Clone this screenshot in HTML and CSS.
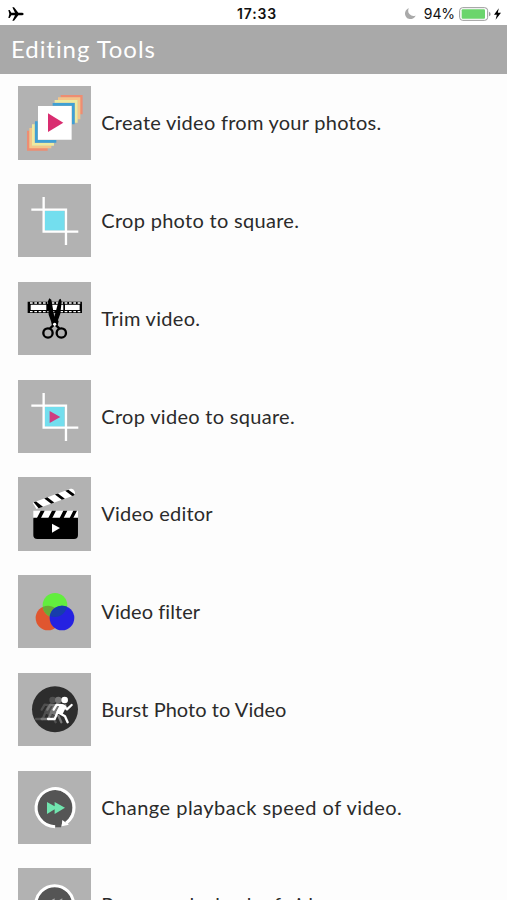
FILE: index.html
```html
<!DOCTYPE html>
<html lang="en">
<head>
<meta charset="utf-8">
<meta name="viewport" content="width=device-width">
<title>Editing Tools</title>
<link rel="stylesheet" href="styles.css">
</head>
<body>
<div class="status">
  <svg class="plane" viewBox="0 0 48 42"><path d="M1 9h4l5 8h11L13 1h5l13 16h12q4 1 4 4t-4 4H31L18 41h-5l8-16H10l-5 8H1l3-12z"/></svg>
  <span class="time">17:33</span>
  <div class="power">
    <svg class="moon" viewBox="0 0 34 34"><path d="M12 1A17 17 0 1 0 33 23A16 16 0 0 1 12 1z"/></svg>
    <span class="percent">94%</span>
    <svg class="battery" viewBox="0 0 96 42"><rect x="2" y="2" width="84" height="38" rx="9" fill="#fff" stroke="#999" stroke-width="3"/><rect x="8" y="7" width="70" height="28" rx="3" fill="#6bd56c"/><path d="M90 14q5 2 5 7t-5 7z" fill="#999"/></svg>
    <svg class="bolt" viewBox="0 0 22 36"><path d="M15 0L0 20h9L5 36L22 14h-10z"/></svg>
  </div>
</div>
<header class="bar"><h1>Editing Tools</h1></header>
<main class="list">
  <div class="row">
    <svg class="tile" viewBox="0 0 220 220">
      <g fill="none" stroke-width="8">
        <path stroke="#ee8d72" d="M128 31h62v54M31 134v56h58"/>
        <path stroke="#f4c58a" d="M120 38h63v62M38 126v57h62"/>
        <path stroke="#eeeaa0" d="M110 46h65v64M46 115v60h62"/>
        <path stroke="#3fa0d4" d="M104 55h62v60M55 106v60h60"/>
      </g>
      <path fill="#fff" d="M60 60h101v101H60z"/><path fill="#d92d70" d="M90 82v56l46-28z"/>
    </svg>
    <span class="label l1">Create video from your photos.</span>
  </div>
  <div class="row">
    <svg class="tile" viewBox="0 0 220 220"><path fill="#73deee" d="M80 80h60v60H80z"/><path class="crop" d="M77 39v104h104M40 77h104v106"/></svg>
    <span class="label l2">Crop photo to square.</span>
  </div>
  <div class="row">
    <svg class="tile" viewBox="0 0 220 220">
      <path d="M29 59h163v34H29z"/><path fill="#fff" d="M38 68h47v16H38zM101 68h35v16h-35zM141 68h44v16h-44z"/>
      <path stroke="#fff" stroke-width="4" stroke-dasharray="8 5" d="M36 63h152M36 89h152"/>
      <path d="M90 58l4-9 6 4 9 51 14-51 5-3 3 9-4 36-12 33h-12l-11-30zM99 117l8-8h6l9 8-3 14h-17z"/>
      <circle cx="110" cy="127" r="5" fill="#fff"/>
      <g fill="none" stroke="#000" stroke-width="7"><circle cx="90" cy="153" r="14"/><circle cx="130" cy="153" r="14"/><path d="M96 139l10-9M124 139l-10-9"/></g>
    </svg>
    <span class="label l3">Trim video.</span>
  </div>
  <div class="row">
    <svg class="tile" viewBox="0 0 220 220"><path fill="#73deee" d="M80 80h60v60H80z"/><path class="crop" d="M77 39v104h104M40 77h104v106"/><path fill="#cf3c80" d="M95 93v36l32-18z"/></svg>
    <span class="label l4">Crop video to square.</span>
  </div>
  <div class="row">
    <svg class="tile" viewBox="0 0 220 220">
      <g transform="translate(44 77) rotate(-20)"><path fill="#fff" d="M0 0h121q9 0 9 11t-9 11H4z"/><path d="M3 0h8l14 22H11zM37 0h10l14 22H51zM71 0h10l14 22H85zM104 0h10l13 19-3 3h-6z"/></g>
      <path fill="#fff" d="M46 101h134v24H46z"/><path d="M68 101h12l-11 22H57zM102 101h12l-11 22H91zM136 101h12l-11 22h-12zM166 101h11l-11 22h-11z"/>
      <path d="M46 122h134v52q0 12-12 12H58q-12 0-12-12z"/><path fill="#fff" d="M102 140v27l24-14z"/>
    </svg>
    <span class="label l5">Video editor</span>
  </div>
  <div class="row">
    <svg class="tile" viewBox="0 0 220 220"><circle cx="90" cy="129" r="37" fill="#e0562f"/><circle cx="111" cy="91" r="37" fill="#62ee3e"/><path fill="#68ab37" d="M74 96a37 37 0 0 1 53 28a37 37 0 0 1-53-28z"/><circle cx="132" cy="129" r="37" fill="#2521e1"/><path fill="#173dac" d="M96 123a37 37 0 0 1 51-28a37 37 0 0 1-51 28z"/></svg>
    <span class="label l6">Video filter</span>
  </div>
  <div class="row">
    <svg class="tile" viewBox="0 0 220 220">
      <defs><g id="runner"><circle cx="140" cy="81" r="10"/><path fill="none" stroke="currentColor" stroke-width="7" stroke-linecap="round" stroke-linejoin="round" d="M107 110l9-15 19 2 12 12 14-13M131 98l-12 19 22 13 8 18M118 119l-8 19H90"/><path d="M127 92l19 7-12 24-19-6z"/></g></defs>
      <circle cx="111" cy="109" r="69" fill="#2d2d2d"/>
      <use href="#runner" x="-36" fill="#505050" color="#505050"/><use href="#runner" x="-19" fill="#777" color="#777"/><use href="#runner" fill="#fff" color="#fff"/>
    </svg>
    <span class="label l7">Burst Photo to Video</span>
  </div>
  <div class="row">
    <svg class="tile" viewBox="0 0 220 220"><circle cx="110" cy="110" r="53" fill="#555"/><path fill="none" stroke="#fff" stroke-width="9" d="M111 167A57 57 0 1 1 145 156"/><path fill="#555" d="M112 156h20l-3 13h-17z"/><path fill="#fff" d="M133 147l20 14-22 5z"/><path fill="#71e5af" d="M87 93v36l23-14v14l31-19-31-17v13z"/></svg>
    <span class="label l8">Change playback speed of video.</span>
  </div>
  <div class="row">
    <svg class="tile" viewBox="0 0 220 220"><circle cx="110" cy="110" r="53" fill="#555"/><circle cx="110" cy="110" r="57" fill="none" stroke="#fff" stroke-width="9"/><path fill="#aaa" d="M133 91v36l-23-14v14l-31-19 31-17v13z"/></svg>
    <span class="label l9">Reverse playback of video.</span>
  </div>
</main>
</body>
</html>
```
FILE: styles.css
```css
* { box-sizing: border-box; }
html, body { height: 100%; }
body { margin: 0; height: 900px; display: flex; flex-direction: column; overflow: hidden; background: #fdfdfd; color: #2b2b2b; font-family: Lato, "Open Sans", sans-serif; }
svg { display: block; flex: none; }
.status { flex: none; height: 25px; display: grid; grid-template-columns: 1fr auto 1fr; align-items: center; padding: 2px 6px 0 8px; background: #fff; color: #111; font-family: Inter, "Liberation Sans", sans-serif; font-size: 14px; }
.plane { width: 16px; height: 14px; }
.time { font-weight: 600; letter-spacing: .8px; padding-left: 5px; }
.power { display: flex; align-items: center; justify-content: flex-end; }
.moon { width: 11px; height: 11px; fill: #aaa; margin-right: 8px; }
.percent { letter-spacing: -.1px; margin-right: 4px; }
.battery { width: 32px; height: 14px; margin-right: 3px; }
.bolt { width: 7px; height: 12px; }
.bar { flex: none; height: 49px; display: flex; align-items: flex-start; padding-left: 11px; background: #a9a9a9; color: #fff; }
.bar h1 { margin: 0; font-size: 24px; line-height: 47px; font-weight: 400; letter-spacing: .93px; }
.list { flex: 1; min-height: 0; overflow: hidden; padding: 12.4px 0 0 18px; }
.row { height: 97.75px; display: flex; align-items: flex-start; }
.tile { width: 73.3px; height: 73.3px; background: #b2b2b2; margin-right: 10px; }
.crop { fill: none; stroke: #fff; stroke-width: 7; }
.label { font-size: 20px; line-height: 73px; letter-spacing: .3px; white-space: nowrap; }
.l1 { letter-spacing: .26px; }
.l5 { letter-spacing: .22px; }
.l6 { letter-spacing: .07px; }
.l7 { letter-spacing: .05px; }
.l8 { letter-spacing: .48px; }
.l9 { line-height: 72px; }
```
